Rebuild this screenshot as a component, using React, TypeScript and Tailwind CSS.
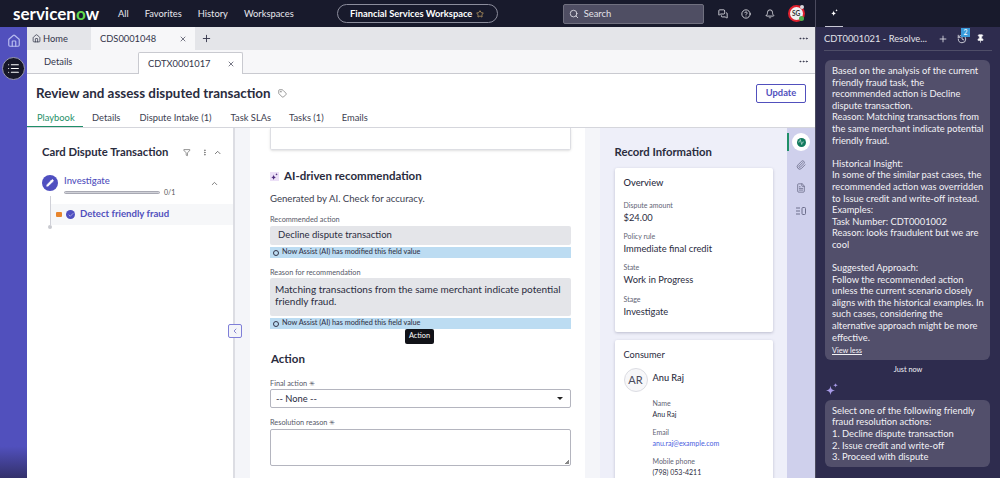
import { Activity, Bell, Check, ChevronLeft, ChevronUp, CircleHelp, Ellipsis, EllipsisVertical, FileText, Filter, History, House, List, MessagesSquare, Paperclip, Pencil, Pin, Plus, Search, Star, Tag, X } from 'lucide-react'

const reply = `Based on the analysis of the current
friendly fraud task, the
recommended action is Decline
dispute transaction.
Reason: Matching transactions from
the same merchant indicate potential
friendly fraud.

Historical Insight:
In some of the similar past cases, the
recommended action was overridden
to Issue credit and write-off instead.
Examples:
Task Number: CDT0001002
Reason: looks fraudulent but we are
cool

Suggested Approach:
Follow the recommended action
unless the current scenario closely
aligns with the historical examples. In
such cases, considering the
alternative approach might be more
effective.`

const choices = `Select one of the following friendly
fraud resolution actions:
1. Decline dispute transaction
2. Issue credit and write-off
3. Proceed with dispute`

function Sparkle({ className }: { className?: string }) {
  return (
    <svg viewBox="0 0 24 24" fill="currentColor" className={className}>
      <path d="M9 5C10 12 12 14 18 15C12 16 10 18 9 24C8 18 6 16 0 15C6 14 8 12 9 5Z" />
      <path d="M19 0C19.5 3 20.5 4 24 4.5C20.5 5 19.5 6 19 9C18.5 6 17.5 5 14 4.5C17.5 4 18.5 3 19 0Z" />
    </svg>
  )
}

function TopBar() {
  return (
    <div className="flex h-[27px] shrink-0 items-center bg-[#181a2c] text-[#e8e8ee]">
      <div className="ml-[13px] w-[86px] text-[17px] leading-none font-bold whitespace-nowrap text-white">
        servicen<span className="text-[#62d84e]">o</span>w
      </div>
      <div className="ml-[19px] flex gap-[16px] text-[9.33px]">
        <span>All</span>
        <span>Favorites</span>
        <span>History</span>
        <span>Workspaces</span>
      </div>
      <div className="ml-[43px] flex h-[19px] w-[161px] items-center justify-center gap-[4px] rounded-full border border-[#8c8d9c] text-[9.33px] font-bold text-white">
        Financial Services Workspace
        <Star size={8} className="text-[#d9b36c]" />
      </div>
      <div className="ml-[65px] flex h-[20px] w-[141px] items-center gap-[5px] rounded-[2px] border border-[#70707f] bg-[#4f4e63] pl-[5px] text-[9.33px] text-[#e3e3ea]">
        <Search size={10} />
        Search
      </div>
      <div className="ml-[14px] flex items-center gap-[13.5px]">
        <MessagesSquare size={10} />
        <CircleHelp size={10} />
        <Bell size={10} />
      </div>
      <div className="relative ml-[13px] flex h-[17px] w-[17px] items-center justify-center rounded-full border-2 border-[#e0202e] bg-[#f1f1f3] text-[6.5px] font-bold text-[#333]">
        SG
        <span className="absolute -right-[1px] -bottom-[1px] h-[5px] w-[5px] rounded-full bg-[#4fb04a]" />
        <span className="absolute -top-[2px] -right-[1px] h-[4px] w-[4px] rounded-full bg-[#d9d9de]" />
      </div>
    </div>
  )
}

function Rail() {
  return (
    <div className="relative flex w-[27px] shrink-0 flex-col items-center bg-[linear-gradient(to_bottom,#5150bd_0%,#5150bd_93%,#33316b_100%)] pt-[7px]">
      <House size={14} className="text-[#b9bdf0]" />
      <div className="mt-[9px] flex h-[23px] w-[23px] items-center justify-center rounded-full border border-[#9a9ab0] bg-[#171828] text-white">
        <List size={13} />
      </div>
    </div>
  )
}

function TabRows() {
  return (
    <>
      <div className="flex h-[23px] shrink-0 items-center bg-[#e4e5e9] text-[9.33px] text-[#33354a]">
        <div className="flex w-[64px] items-center gap-[2px] pl-[5px]">
          <House size={9} />
          Home
        </div>
        <div className="flex h-full w-[104px] items-center justify-between bg-[#f7f7f9] pr-[8px] pl-[9px]">
          CDS0001048
          <X size={8} />
        </div>
        <Plus size={11} className="ml-[6px]" />
        <Ellipsis size={11} className="mr-[6px] ml-auto" />
      </div>
      <div className="flex h-[24px] shrink-0 items-end border-b border-[#c9cad0] bg-[#f7f7f9] text-[9.33px] text-[#33354a]">
        <div className="flex h-full w-[111px] items-center pl-[17px]">Details</div>
        <div className="-mb-px flex h-[22px] w-[105px] items-center justify-between rounded-t-[2px] border border-b-0 border-[#c9cad0] bg-white pr-[7px] pl-[9px]">
          CDTX0001017
          <X size={8} />
        </div>
        <Ellipsis size={11} className="mr-[6px] mb-[6px] ml-auto" />
      </div>
    </>
  )
}

function Heading() {
  return (
    <div className="shrink-0 border-b border-[#d5d6dc] bg-white">
      <div className="flex h-[38px] items-center pr-[9px] pl-[9px]">
        <h1 className="text-[13.4px] font-bold text-[#2a2c3e]">Review and assess disputed transaction</h1>
        <Tag size={9} className="ml-[7px] text-[#777]" />
        <button className="ml-auto flex h-[19px] w-[50px] items-center justify-center rounded-[2px] border border-[#5150bd] text-[9.33px] font-bold text-[#5150bd]">
          Update
        </button>
      </div>
      <div className="flex h-[15px] text-[9.33px] leading-[12px] text-[#3c3e50]">
        <span className="w-[56px] border-b border-[#1f8f68] pl-[10px] text-[#1f8f68]">Playbook</span>
        <span className="ml-[9px]">Details</span>
        <span className="ml-[19px]">Dispute Intake (1)</span>
        <span className="ml-[19px]">Task SLAs</span>
        <span className="ml-[18px]">Tasks (1)</span>
        <span className="ml-[18px]">Emails</span>
      </div>
    </div>
  )
}

function Playbook() {
  return (
    <div className="relative w-[208px] shrink-0 border-r-2 border-[#dcdde3] bg-white pt-[17px]">
      <div className="flex h-[14px] items-center pr-[11px] pl-[15px] whitespace-nowrap">
        <span className="text-[11.3px] font-bold text-[#2a2c3e]">Card Dispute Transaction</span>
        <Filter size={9} className="ml-[15px] text-[#555]" />
        <EllipsisVertical size={9} className="ml-[10px] text-[#555]" />
        <ChevronUp size={11} className="ml-[4px] text-[#555]" />
      </div>
      <div className="mt-[16px] flex pr-[14px] pl-[15px]">
        <div className="flex h-[16px] w-[16px] items-center justify-center rounded-full bg-[#4f4fc0] text-white">
          <Pencil size={8} fill="white" />
        </div>
        <div className="ml-[6px] flex-1">
          <div className="text-[9.5px] leading-[12px] font-medium text-[#5150bd]">Investigate</div>
          <div className="mt-[1px] flex items-center gap-[4px]">
            <div className="h-[3px] w-[96px] rounded-full border border-[#a8a9b3] bg-[#d0d1d8]" />
            <span className="text-[7px] leading-[8px] text-[#555]">0/1</span>
          </div>
        </div>
        <ChevronUp size={9} className="mt-[4px] text-[#555]" />
      </div>
      <div className="ml-[23px] h-[8px] w-px bg-[#d0d1d8]" />
      <div className="ml-[23px] flex h-[21px] items-center border-l border-[#d0d1d8] bg-[#f6f7f9] pl-[5px]">
        <span className="h-[5px] w-[6px] rounded-[1px] bg-[#e8852d]" />
        <span className="ml-[4px] flex h-[9px] w-[9px] items-center justify-center rounded-full bg-[#4f4fc0] text-white">
          <Check size={6} />
        </span>
        <span className="ml-[5px] text-[9.6px] font-bold text-[#5150bd]">Detect friendly fraud</span>
      </div>
      <div className="ml-[21px] h-[4px] w-[4px] rounded-full bg-[#c9cad0]" />
    </div>
  )
}

function AssistNote() {
  return (
    <div className="mt-[2px] flex h-[11px] items-center gap-[3px] bg-[#bcdcf2] pl-[3px] text-[7.25px] font-medium text-[#33354a]">
      <span className="h-[6px] w-[6px] rounded-full border border-[#33354a]" />
      Now Assist (AI) has modified this field value
    </div>
  )
}

function Recommendation() {
  return (
    <div className="relative w-[335px] shrink-0 bg-white pl-[20px]">
      <div className="h-[22px] w-[301px] rounded-b-[2px] border border-t-0 border-[#dddee3] shadow-sm" />
      <div className="mt-[19px] flex h-[14px] items-center gap-[5px]">
        <span className="flex h-[9px] w-[9px] items-center justify-center bg-[#ece0f7] text-[#4a2a7a]">
          <Sparkle className="h-[7px] w-[7px]" />
        </span>
        <span className="text-[11.5px] font-bold text-[#2a2c3e]">AI-driven recommendation</span>
      </div>
      <p className="mt-[10px] text-[9.6px] leading-[12px] text-[#3c3e50]">Generated by AI. Check for accuracy.</p>
      <div className="mt-[10px] w-[301px]">
        <label className="block text-[7.33px] leading-[10px] text-[#565868]">Recommended action</label>
        <div className="mt-[1px] flex h-[19px] items-center rounded-[2px] bg-[#e4e5e9] pl-[8px] text-[9.5px] text-[#2a2c3e]">
          Decline dispute transaction
        </div>
        <AssistNote />
        <label className="mt-[10px] block text-[7.33px] leading-[10px] text-[#565868]">Reason for recommendation</label>
        <div className="h-[38px] rounded-[2px] bg-[#e4e5e9] pt-[6px] pl-[5px] text-[10px] leading-[11.5px] text-[#2a2c3e]">
          Matching transactions from the same merchant indicate potential
          <br />
          friendly fraud.
        </div>
        <AssistNote />
      </div>
      <h2 className="mt-[22px] ml-px text-[11.5px] leading-[15px] font-bold text-[#2a2c3e]">Action</h2>
      <div className="w-[301px]">
        <label className="mt-[13px] block text-[7.33px] leading-[10px] text-[#565868]">Final action ✳</label>
        <div className="flex h-[19px] items-center justify-between rounded-[2px] border border-[#b4b5bf] pr-[7px] pl-[5px] text-[9.33px] text-[#2a2c3e]">
          -- None --
          <span className="h-0 w-0 border-x-[3px] border-t-[3px] border-x-transparent border-t-[#222]" />
        </div>
        <label className="mt-[10px] block text-[7.33px] leading-[10px] text-[#565868]">Resolution reason ✳</label>
        <div className="relative mt-[1px] h-[37px] rounded-[2px] border border-[#b4b5bf]">
          <span className="absolute right-[1px] bottom-[1px] h-[4px] w-[4px] bg-[linear-gradient(135deg,transparent_50%,#888_50%)]" />
        </div>
      </div>
      <div className="absolute top-[201px] left-[155px] flex h-[15px] w-[29px] items-center justify-center rounded-[2px] bg-[#111218] text-[7.33px] text-white">
        Action
      </div>
    </div>
  )
}

function Field({ label, value }: { label: string; value: string }) {
  return (
    <div className="mb-[7.2px]">
      <div className="text-[7px] leading-[10px] text-[#626474]">{label}</div>
      <div className="mt-[1px] text-[9.33px] leading-[13px] text-[#2a2c3e]">{value}</div>
    </div>
  )
}

function ContactField({ label, value, link }: { label: string; value: string; link?: boolean }) {
  return (
    <div className="mb-[8px] whitespace-nowrap">
      <div className="text-[7px] leading-[10px] text-[#626474]">{label}</div>
      <div className={`mt-[1px] text-[7px] leading-[10px] ${link ? 'text-[#4a5ce0]' : 'text-[#2a2c3e]'}`}>{value}</div>
    </div>
  )
}

function RecordInfo() {
  return (
    <div className="w-[187px] shrink-0 bg-[#eeeff9] px-[14.5px] pt-[16px]">
      <h2 className="text-[11.3px] leading-[15px] font-bold text-[#2a2c3e]">Record Information</h2>
      <div className="mt-[9px] h-[164px] rounded-[2px] bg-white px-[9px] pt-[9px] shadow-[0_1px_3px_rgba(40,40,80,0.25)]">
        <div className="text-[9.33px] leading-[12px] font-medium text-[#2a2c3e]">Overview</div>
        <div className="mt-[11px]">
          <Field label="Dispute amount" value="$24.00" />
          <Field label="Policy rule" value="Immediate final credit" />
          <Field label="State" value="Work in Progress" />
          <Field label="Stage" value="Investigate" />
        </div>
      </div>
      <div className="mt-[8px] h-[200px] rounded-[2px] bg-white px-[9px] pt-[9px] shadow-[0_1px_3px_rgba(40,40,80,0.25)]">
        <div className="text-[9.2px] leading-[12px] text-[#2a2c3e]">Consumer</div>
        <div className="mt-[7px] flex">
          <div className="flex h-[24px] w-[24px] shrink-0 items-center justify-center rounded-full border border-[#dcdde3] bg-[#f7f7f9] text-[11px] text-[#4a4c5c]">
            AR
          </div>
          <div className="ml-[5px] pt-[4px]">
            <div className="text-[9.2px] leading-[12px] font-medium text-[#2a2c3e]">Anu Raj</div>
            <div className="mt-[14px]">
              <ContactField label="Name" value="Anu Raj" />
              <ContactField label="Email" value="anu.raj@example.com" link />
              <ContactField label="Mobile phone" value="(798) 053-4211" />
            </div>
          </div>
        </div>
      </div>
    </div>
  )
}

function SideTools() {
  return (
    <div className="flex w-[28px] shrink-0 flex-col items-center bg-[#cfd0ec] pt-[5px] text-[#6d6f8c]">
      <div className="relative flex h-[18px] w-[18px] items-center justify-center rounded-full bg-white">
        <span className="absolute top-0 -left-[5px] h-[18px] w-[1.5px] bg-[#1f8f68]" />
        <span className="flex h-[9px] w-[9px] items-center justify-center rounded-full bg-[#127a5e] text-white">
          <Activity size={6} />
        </span>
      </div>
      <Paperclip size={10} className="mt-[9px]" />
      <FileText size={10} className="mt-[13px]" />
      <svg viewBox="0 0 10 8" fill="none" stroke="currentColor" className="mt-[14px] h-[8px] w-[10px]">
        <path d="M0 1H4M0 4H4M0 7H4" />
        <rect x="6" y="0.5" width="3.5" height="7" rx="1" />
      </svg>
    </div>
  )
}

function AssistPanel() {
  return (
    <div className="flex w-[185px] shrink-0 flex-col border-l border-[#4b4b5e] bg-[#2e2c4e] text-[#f2f2f6]">
      <div className="h-[27px] shrink-0 bg-[#181a2c] pl-[9px]">
        <div className="flex h-[26.5px] w-[18px] items-center justify-center border-b border-[#c9c9d6] text-white">
          <Sparkle className="h-[7px] w-[7px]" />
        </div>
      </div>
      <div className="mx-[8px] flex h-[24px] shrink-0 items-center border-b border-[#4f4e68] text-[9.33px] whitespace-nowrap text-[#e3e3ea]">
        <span className="w-[103px]">CDT0001021 - Resolve...</span>
        <Plus size={10} className="ml-[11px]" />
        <div className="relative ml-[9px]">
          <History size={10} />
          <span className="absolute -top-[6px] left-[4px] flex h-[9px] w-[9px] items-center justify-center bg-[#3a9ad9] text-[7px] text-white">2</span>
        </div>
        <Pin size={9} fill="white" className="ml-[9px]" />
      </div>
      <div className="mt-[9px] ml-[9px] w-[165px] shrink-0 rounded-[6px] bg-[#524f6b] pt-[5px] pb-[4px] pl-[7px] text-[9.33px] leading-[11.6px] whitespace-pre">
        {reply}
        <div className="mt-[3px] text-[7.33px] leading-[10px] underline">View less</div>
      </div>
      <div className="mt-[4.5px] shrink-0 text-center text-[7.33px] leading-[10px]">Just now</div>
      <Sparkle className="mt-[8px] ml-[10px] h-[12px] w-[12px] shrink-0 text-[#a89be8]" />
      <div className="mt-[5px] ml-[9px] w-[165px] shrink-0 rounded-[6px] bg-[#524f6b] pt-[5px] pb-[4px] pl-[7px] text-[9.33px] leading-[11.6px] whitespace-pre">
        {choices}
      </div>
    </div>
  )
}

export default function App() {
  return (
    <div className="flex h-[478px] w-[1000px] overflow-hidden bg-white font-['Lato',sans-serif]">
      <div className="flex w-[815px] shrink-0 flex-col overflow-hidden">
        <TopBar />
        <div className="flex min-h-0 flex-1">
          <Rail />
          <div className="flex min-w-0 flex-1 flex-col">
            <TabRows />
            <Heading />
            <div className="relative flex min-h-0 flex-1 overflow-hidden">
              <Playbook />
              <div className="w-[15px] shrink-0 bg-[#f4f5f9]" />
              <Recommendation />
              <div className="w-[15px] shrink-0 bg-[#f4f5f9]" />
              <RecordInfo />
              <SideTools />
              <button className="absolute top-[196px] left-[201px] flex h-[14px] w-[14px] items-center justify-center rounded-[2px] border border-[#7f7fd8] bg-[#f4f5f9] text-[#5150bd]">
                <ChevronLeft size={8} />
              </button>
            </div>
          </div>
        </div>
      </div>
      <AssistPanel />
    </div>
  )
}
